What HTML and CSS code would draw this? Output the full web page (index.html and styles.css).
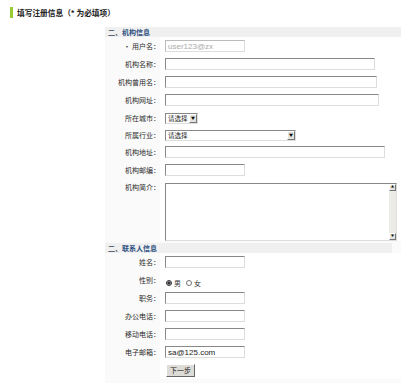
FILE: index.html
```html
<!DOCTYPE html>
<html lang="zh-CN">
  <head>
    <meta charset="UTF-8" />
    <title>填写注册信息</title>
    <link rel="stylesheet" href="styles.css">
  </head>
  <body>
    <div class="title"><span class="bar"></span>填写注册信息（* 为必填项）</div>

    <div class="form">
      <div class="section"><span class="num">二、</span>机构信息</div>
      <div class="row"><span class="label">• 用户名：</span><span class="field"><input class="text w80 hint" value="user123@zx" /></span></div>
      <div class="row"><span class="label">机构名称：</span><span class="field"><input class="text w210" /></span></div>
      <div class="row"><span class="label">机构曾用名：</span><span class="field"><input class="text w212" /></span></div>
      <div class="row"><span class="label">机构网址：</span><span class="field"><input class="text w214" /></span></div>
      <div class="row"><span class="label">所在城市：</span><span class="field">
        <span class="select w32"><span class="sel-text">请选择</span><span class="arrow">▼</span></span>
      </span></div>
      <div class="row short"><span class="label">所属行业：</span><span class="field">
        <span class="select w130"><span class="sel-text">请选择</span><span class="arrow">▼</span></span>
      </span></div>
      <div class="row"><span class="label">机构地址：</span><span class="field"><input class="text w220" /></span></div>
      <div class="row"><span class="label">机构邮编：</span><span class="field"><input class="text w80" /></span></div>
      <div class="row tall"><span class="label top">机构简介：</span><span class="field top">
        <span class="memo">
          <textarea></textarea>
          <span class="scroll"><span class="btn">▲</span><span class="btn">▼</span></span>
        </span>
      </span></div>

      <div class="section second"><span class="num">二、</span>联系人信息</div>
      <div class="row"><span class="label">姓名：</span><span class="field"><input class="text w80" /></span></div>
      <div class="row"><span class="label">性别：</span><span class="field radios">
        <label><input type="radio" name="sex" checked />男</label>
        <label><input type="radio" name="sex" />女</label>
      </span></div>
      <div class="row"><span class="label">职务：</span><span class="field"><input class="text w80" /></span></div>
      <div class="row"><span class="label">办公电话：</span><span class="field"><input class="text w80" /></span></div>
      <div class="row"><span class="label">移动电话：</span><span class="field"><input class="text w80" /></span></div>
      <div class="row"><span class="label">电子邮箱：</span><span class="field"><input class="text w80" value="sa@125.com" /></span></div>
      <div class="row"><span class="label"></span><span class="field"><button class="next">下一步</button></span></div>
    </div>
  </body>
</html>
```

FILE: styles.css
```css
body {
  margin: 0;
  background: #fff;
  font-family: "Noto Sans CJK SC", "Liberation Sans", sans-serif;
  font-size: 7px;
  color: #333;
}
.title {
  display: flex;
  align-items: center;
  height: 11px;
  margin: 7px 0 0 10px;
  font-weight: bold;
  font-size: 7.7px;
  color: #222;
}
.bar {
  width: 3px;
  height: 11px;
  background: #9c3;
  margin-right: 4px;
}
.form {
  width: 296px;
  margin: 9px 0 0 105px;
  padding-bottom: 4px;
  background: #fafafa;
}
.section {
  height: 10px;
  line-height: 10px;
  padding-left: 3px;
  background: #f0f0f0;
  color: #2b4f80;
  font-weight: bold;
}
.section .num {
  color: #5a6678;
}
.section.second {
  margin-right: 9px;
  margin-top: 2px;
}
.row {
  display: flex;
  height: 18px;
}
.row.short {
  height: 16px;
}
.row.tall {
  height: 62px;
}
.label {
  width: 55px;
  display: flex;
  align-items: center;
  justify-content: flex-end;
  color: #2a2a2a;
}
.label.top {
  align-items: flex-start;
  padding-top: 3px;
  height: 12px;
}
.field {
  flex: 1;
  display: flex;
  align-items: center;
  padding-left: 5px;
  background: #fff;
}
.field.top {
  align-items: flex-start;
  padding-top: 4px;
}
.text {
  box-sizing: border-box;
  height: 12px;
  padding: 0 2px;
  border: 1px solid;
  border-color: #888 #ddd #ddd #888;
  font-family: "Liberation Sans", sans-serif;
  font-size: 8px;
  color: #222;
  background: #fff;
  outline: none;
}
.text.hint {
  color: #aaa;
  border-color: #bbb #ddd #ddd #bbb;
}
.w80 { width: 80px; }
.w210 { width: 210px; }
.w212 { width: 212px; }
.w214 { width: 214px; }
.w220 { width: 220px; }
.w32 { width: 33px; }
.w130 { width: 131px; }
.select {
  box-sizing: border-box;
  height: 11px;
  display: flex;
  align-items: center;
  justify-content: space-between;
  border: 1px solid;
  border-color: #888 #ddd #ddd #888;
  background: #fff;
  padding-left: 2px;
  font-size: 6.5px;
  color: #222;
}
.arrow {
  box-sizing: border-box;
  width: 8px;
  height: 9px;
  background: #e4e2dc;
  border: 1px solid;
  border-color: #fff #777 #777 #fff;
  font-size: 4px;
  line-height: 7px;
  text-align: center;
  color: #000;
}
.memo {
  box-sizing: border-box;
  display: flex;
  width: 232px;
  height: 58px;
  border: 1px solid;
  border-color: #888 #ddd #ddd #888;
  background: #fff;
}
.memo textarea {
  flex: 1;
  border: none;
  resize: none;
  outline: none;
  padding: 0;
}
.scroll {
  width: 7px;
  display: flex;
  flex-direction: column;
  justify-content: space-between;
  background: #ecebe6;
}
.scroll .btn {
  box-sizing: border-box;
  height: 7px;
  background: #e4e2dc;
  border: 1px solid;
  border-color: #fff #777 #777 #fff;
  font-size: 3px;
  line-height: 5px;
  text-align: center;
  color: #000;
}
.radios {
  gap: 4px;
  padding-top: 5px;
}
.radios label {
  display: flex;
  align-items: center;
  gap: 1px;
}
.radios input {
  width: 6px;
  height: 6px;
  margin: 0 1px 0 1px;
  accent-color: #333;
}
.next {
  box-sizing: border-box;
  width: 29px;
  height: 13px;
  margin-left: 1px;
  padding: 0;
  font-family: "Noto Sans CJK SC", sans-serif;
  font-size: 7px;
  color: #222;
  background: #dedcd6;
  border: 1px solid;
  border-color: #fff #666 #666 #fff;
}
```
